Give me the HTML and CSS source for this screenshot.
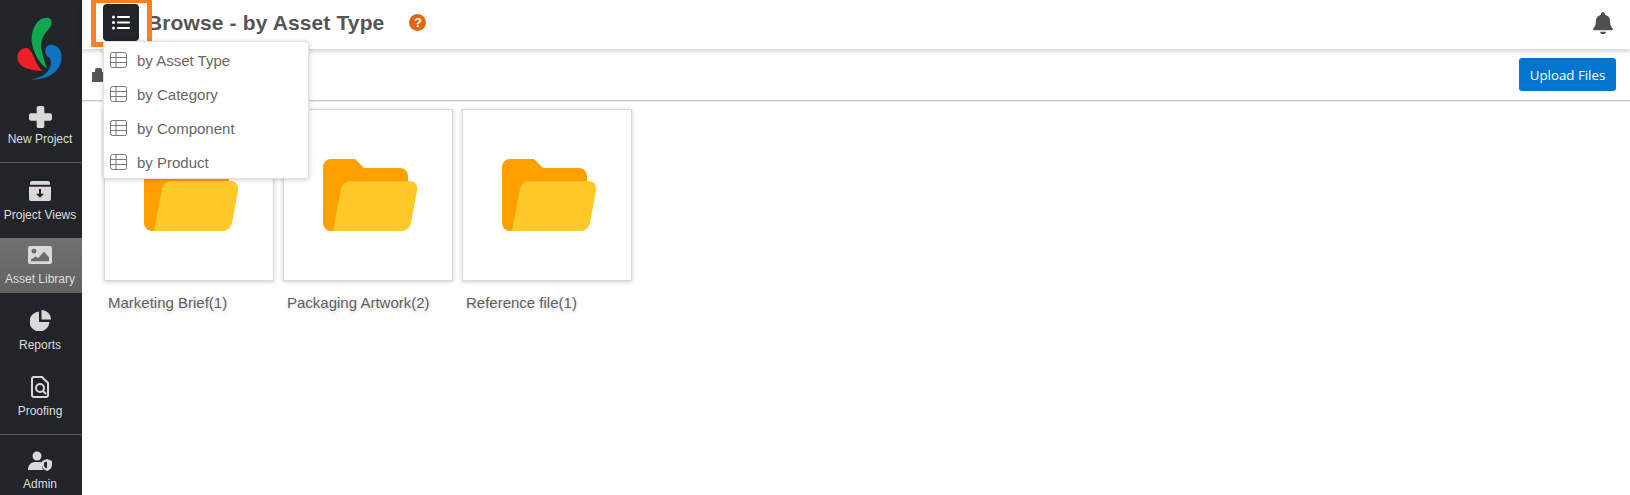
FILE: index.html
```html
<!DOCTYPE html>
<html lang="en">
<head>
<meta charset="utf-8">
<title>Browse - by Asset Type</title>
<link rel="stylesheet" href="styles.css">
</head>
<body>
<div class="app">
  <aside class="sidebar">
    <div class="logo">
      <svg width="82" height="82" viewBox="0 0 246 246">
        <path fill="#12a650" d="M152 58C160 70 152 82 138 97C125 112 122 127 125 150C128 170 136 190 141 205C122 195 102 165 96 130C91 100 105 62 130 55C140 52 148 53 152 58Z"/>
        <path fill="#ee2027" d="M52 172C52 155 65 143 80 144C95 146 100 170 110 190C115 200 122 208 127 212C100 214 52 205 52 172Z"/>
        <path fill="#0f74bd" d="M136 150C139 128 172 128 182 155C194 192 165 241 93 238C128 235 150 215 153 190C154 177 148 172 144 170C138 166 135 158 136 150Z"/>
      </svg>
    </div>
    <a class="nav-item nav-first">
      <svg class="nav-icon" width="23" height="22" viewBox="0 0 24 24" preserveAspectRatio="none"><path fill="#d9d9d9" d="M8 2a2 2 0 0 1 2-2h4a2 2 0 0 1 2 2v6h6a2 2 0 0 1 2 2v4a2 2 0 0 1-2 2h-6v6a2 2 0 0 1-2 2h-4a2 2 0 0 1-2-2v-6H2a2 2 0 0 1-2-2v-4a2 2 0 0 1 2-2h6z"/></svg>
      <span>New Project</span>
    </a>
    <hr class="nav-sep">
    <a class="nav-item nav-views">
      <svg class="nav-icon" width="22" height="20" viewBox="0 0 22 21" preserveAspectRatio="none"><path fill="#d9d9d9" fill-rule="evenodd" d="M3 0h16a2 2 0 0 1 2 2v2H1V2a2 2 0 0 1 2-2zM0 6h22v13a2 2 0 0 1-2 2H2a2 2 0 0 1-2-2V6zm10 2.500v5H7l4 4 4-4h-3v-5h-2z"/></svg>
      <span>Project Views</span>
    </a>
    <a class="nav-item nav-active">
      <svg class="nav-icon" width="24" height="18" viewBox="0 0 24 19" preserveAspectRatio="none"><path fill="#d9d9d9" fill-rule="evenodd" d="M2 0h20a2 2 0 0 1 2 2v15a2 2 0 0 1-2 2H2a2 2 0 0 1-2-2V2a2 2 0 0 1 2-2zm4 3a2.500 2.500 0 1 0 0 5 2.500 2.500 0 0 0 0-5zM3 16h18v-4l-5-6-6 7-2-2-5 3z"/></svg>
      <span>Asset Library</span>
    </a>
    <a class="nav-item nav-reports">
      <svg class="nav-icon" width="21" height="21" viewBox="0 0 21 21"><path fill="#d9d9d9" d="M9 1.500V12h10.500A10 10 0 1 1 9 1.500zM11.500 0A9.500 9.500 0 0 1 21 9.500h-9.500z"/></svg>
      <span>Reports</span>
    </a>
    <a class="nav-item nav-proof">
      <svg class="nav-icon" width="18" height="22" viewBox="0 0 18 22"><path fill="none" stroke="#d9d9d9" stroke-width="2" d="M3 1h8l6 6v12a2 2 0 0 1-2 2H3a2 2 0 0 1-2-2V3a2 2 0 0 1 2-2z"/><circle cx="9" cy="12" r="4" fill="none" stroke="#d9d9d9" stroke-width="2"/><path stroke="#d9d9d9" stroke-width="2" d="M12 15l3 3"/></svg>
      <span>Proofing</span>
    </a>
    <hr class="nav-sep nav-sep-low">
    <a class="nav-item nav-admin">
      <svg class="nav-icon" width="24" height="20" viewBox="0 0 24 20"><circle cx="9" cy="5" r="4.500" fill="#d9d9d9"/><path fill="#d9d9d9" d="M0 19c0-5 3-8 7-8h5c1 0 2 .3 2 .3V15c0 1.500.5 3 1.500 4z"/><path fill="#d9d9d9" fill-rule="evenodd" d="M19 8l5 2v4c0 3-2 5-5 6-3-1-5-3-5-6v-4zm0 2.500l-3 1V14c0 1.500 1 3 3 3.500z"/></svg>
      <span>Admin</span>
    </a>
  </aside>
  <main class="main">
    <header class="topbar">
      <h1 class="title">Browse - by Asset Type</h1>
      <span class="help">?</span>
      <svg class="bell" width="20" height="22" viewBox="0 0 21 24" preserveAspectRatio="none"><path fill="#4f4f4f" d="M10.500 0a2 2 0 0 1 2 2v.900A7.500 7.500 0 0 1 18 10c0 5 1.500 6.500 2.600 7.700.8.900.3 2.300-1 2.300H1.400c-1.300 0-1.800-1.400-1-2.300C1.500 16.500 3 15 3 10a7.500 7.500 0 0 1 5.500-7.100V2a2 2 0 0 1 2-2zM7.500 21.500h6a3 2.500 0 0 1-6 0z"/></svg>
    </header>
    <div class="subbar">
      <svg class="crumb" width="13" height="14" viewBox="0 0 13 14"><path fill="#555" d="M3 2a2 2 0 0 1 2-2h3a2 2 0 0 1 2 2v2H3zM1 4h11a1 1 0 0 1 1 1v8a1 1 0 0 1-1 1H1a1 1 0 0 1-1-1V5a1 1 0 0 1 1-1z"/></svg>
      <button class="upload">Upload Files</button>
    </div>
    <section class="grid">
      <figure class="tile">
        <div class="card">
          <svg width="95" height="72" viewBox="0 0 95 72"><path fill="#ffa000" d="M8 0h24l9 9h36a8 8 0 0 1 8 8v47a8 8 0 0 1-8 8H8a8 8 0 0 1-8-8V8a8 8 0 0 1 8-8z"/><path fill="#ffca28" d="M10 72L18 30c1-5 5-8 10-8h58c6 0 9 4 8 10l-6 32c-1 5-5 8-10 8z"/></svg>
        </div>
        <figcaption>Marketing Brief(1)</figcaption>
      </figure>
      <figure class="tile">
        <div class="card">
          <svg width="95" height="72" viewBox="0 0 95 72"><path fill="#ffa000" d="M8 0h24l9 9h36a8 8 0 0 1 8 8v47a8 8 0 0 1-8 8H8a8 8 0 0 1-8-8V8a8 8 0 0 1 8-8z"/><path fill="#ffca28" d="M10 72L18 30c1-5 5-8 10-8h58c6 0 9 4 8 10l-6 32c-1 5-5 8-10 8z"/></svg>
        </div>
        <figcaption>Packaging Artwork(2)</figcaption>
      </figure>
      <figure class="tile">
        <div class="card">
          <svg width="95" height="72" viewBox="0 0 95 72"><path fill="#ffa000" d="M8 0h24l9 9h36a8 8 0 0 1 8 8v47a8 8 0 0 1-8 8H8a8 8 0 0 1-8-8V8a8 8 0 0 1 8-8z"/><path fill="#ffca28" d="M10 72L18 30c1-5 5-8 10-8h58c6 0 9 4 8 10l-6 32c-1 5-5 8-10 8z"/></svg>
        </div>
        <figcaption>Reference file(1)</figcaption>
      </figure>
    </section>
  </main>
  <div class="menu-btn">
    <svg width="18" height="15" viewBox="0 0 18 15"><g fill="#fff"><circle cx="1.500" cy="2" r="1.500"/><circle cx="1.500" cy="7.500" r="1.500"/><circle cx="1.500" cy="13" r="1.500"/><rect x="5" y="1" width="13" height="2" rx="1"/><rect x="5" y="6.500" width="13" height="2" rx="1"/><rect x="5" y="12" width="13" height="2" rx="1"/></g></svg>
  </div>
  <div class="highlight"></div>
  <nav class="dropdown">
    <a class="dd-item"><svg width="17" height="16" viewBox="0 0 17 16"><g fill="none" stroke="#777" stroke-width="1"><rect x=".5" y=".5" width="16" height="15" rx="2"/><path d="M.5 5.500h16M.5 10.500h16M6 .5v15"/></g></svg>by Asset Type</a>
    <a class="dd-item"><svg width="17" height="16" viewBox="0 0 17 16"><g fill="none" stroke="#777" stroke-width="1"><rect x=".5" y=".5" width="16" height="15" rx="2"/><path d="M.5 5.500h16M.5 10.500h16M6 .5v15"/></g></svg>by Category</a>
    <a class="dd-item"><svg width="17" height="16" viewBox="0 0 17 16"><g fill="none" stroke="#777" stroke-width="1"><rect x=".5" y=".5" width="16" height="15" rx="2"/><path d="M.5 5.500h16M.5 10.500h16M6 .5v15"/></g></svg>by Component</a>
    <a class="dd-item"><svg width="17" height="16" viewBox="0 0 17 16"><g fill="none" stroke="#777" stroke-width="1"><rect x=".5" y=".5" width="16" height="15" rx="2"/><path d="M.5 5.500h16M.5 10.500h16M6 .5v15"/></g></svg>by Product</a>
  </nav>
</div>
</body>
</html>
```
FILE: styles.css
```css
* { box-sizing: border-box; }
html, body { margin: 0; height: 100%; overflow: hidden; background: #fff; }
body { font-family: "Liberation Sans", Arial, sans-serif; color: #5a5a5a; }
.app { position: relative; display: flex; height: 495px; width: 1630px; }

.sidebar { width: 82px; flex: none; background: #212529; display: flex; flex-direction: column; align-items: stretch; }
.logo { height: 106px; }
.logo svg { display: block; }
.nav-item { display: flex; flex-direction: column; align-items: center; padding-right: 2px; color: #dedede; font-size: 12px; line-height: 14px; }
.nav-item span { display: block; }
.nav-icon { display: block; flex: none; }
.nav-first .nav-icon { margin-bottom: 4px; }
.nav-sep { height: 1px; border: 0; margin: 16px 0 0; background: #555a5f; flex: none; }
.nav-views { margin-top: 18px; }
.nav-views .nav-icon { margin-bottom: 7px; }
.nav-active { margin-top: 16px; height: 55px; padding-top: 8px; background: linear-gradient(#707070, #626262); }
.nav-active .nav-icon { margin-bottom: 8px; }
.nav-reports { margin-top: 17px; }
.nav-reports .nav-icon { margin-bottom: 7px; }
.nav-proof { margin-top: 24px; }
.nav-proof .nav-icon { margin-bottom: 6px; }
.nav-sep-low { margin-top: 16px; }
.nav-admin { margin-top: 16px; }
.nav-admin .nav-icon { margin-bottom: 6px; }

.main { flex: 1; min-width: 0; display: flex; flex-direction: column; }
.topbar { height: 49px; flex: none; display: flex; align-items: center; padding: 0 17px 4px 65px; box-shadow: 0 2px 5px rgba(0,0,0,.2); position: relative; }
.title { margin: 0; font-size: 21px; font-weight: bold; color: #555; white-space: nowrap; letter-spacing: .13px; }
.help { margin-left: 25px; width: 17px; height: 17px; border-radius: 50%; background: #e8650f; color: #fff; font-size: 13px; font-weight: bold; line-height: 17px; text-align: center; }
.bell { margin-left: auto; }

.subbar { height: 52px; flex: none; display: flex; align-items: center; justify-content: space-between; padding: 0 14px 0 10px; border-bottom: 1px solid #ccc; box-shadow: 0 1px 1px rgba(0,0,0,.08); }
.upload { width: 97px; height: 33px; border: 0; border-radius: 3px; background: #0275d1; color: #fff; font-family: "Open Sans", sans-serif; font-size: 13.3px; padding: 0; }

.grid { display: flex; gap: 9px; padding: 8px 0 0 22px; }
.tile { margin: 0; width: 170px; }
.card { height: 172px; padding-left: 5px; border: 1px solid #d8d8d8; box-shadow: 0 1px 4px rgba(0,0,0,.2); display: flex; align-items: center; justify-content: center; background: #fff; }
figcaption { margin: 13px 0 0 4px; font-size: 15px; line-height: 17px; color: #5f5f5f; white-space: nowrap; text-shadow: 0 2px 4px rgba(0,0,0,.18); }

.menu-btn { position: absolute; left: 103px; top: 4px; width: 36px; height: 37px; border-radius: 4px; background: #212529; display: flex; align-items: center; justify-content: center; }
.highlight { position: absolute; left: 91px; top: 0; width: 61px; height: 47px; border: 5px solid #ff7f27; border-top-width: 3px; }
.dropdown { position: absolute; left: 103px; top: 41px; width: 206px; height: 138px; padding: 1px 0; background: #fff; border: 1px solid #e2e2e2; border-radius: 3px; box-shadow: 0 1px 5px rgba(0,0,0,.2); }
.dd-item { display: flex; align-items: center; height: 34px; padding-left: 6px; font-size: 15px; color: #666; }
.dd-item svg { margin-right: 10px; }
```
